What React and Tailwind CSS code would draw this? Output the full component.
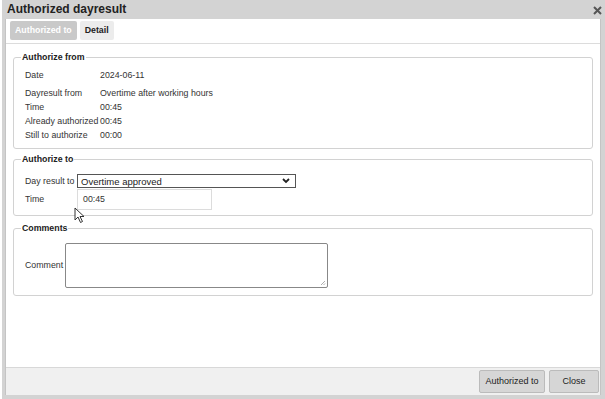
import React from 'react';

const Row = ({ label, value }) => (
  <div className="flex h-[14px] items-center">
    <span className="w-[75px] whitespace-nowrap">{label}</span>
    <span>{value}</span>
  </div>
);

const Fieldset = ({ legend, className, children }) => (
  <fieldset className={`mx-[7px] rounded-[3px] border border-[#d2d2d2] px-[11px] ${className}`}>
    <legend className="-ml-[4px] px-[1px] text-[8.8px] font-bold leading-[11px] text-[#222]">{legend}</legend>
    {children}
  </fieldset>
);

export default function App() {
  return (
    <div
      className="relative flex h-[399px] w-[605px] bg-white text-[8.8px] leading-[11px] text-[#333]"
      style={{ fontFamily: '"Liberation Sans", Arial, sans-serif' }}
    >
      <div className="ml-[2px] flex flex-1 flex-col bg-[#d3d3d3]">
        {/* title bar */}
        <div className="flex h-[19px] items-center justify-between pl-[5px] pr-[3px]">
          <span className="text-[12px] font-bold text-[#222]">Authorized dayresult</span>
          <svg width="9" height="9" viewBox="0 0 9 9" className="mt-[1px]">
            <path d="M1 1 L8 8 M8 1 L1 8" stroke="#555" strokeWidth="2" />
          </svg>
        </div>

        <div className="ml-[3px] mr-[4px] flex flex-1 flex-col border-x border-[#c4c4c4] bg-white">
          {/* tabs */}
          <div className="flex h-[25px] items-start gap-[3px] border-b border-[#dcdcdc] pl-[4px] pt-[2px]">
            <div className="flex h-[19px] items-center rounded-[2px] bg-[#c9c9c9] px-[5px] font-bold text-white">
              Authorized to
            </div>
            <div className="flex h-[19px] items-center rounded-[2px] bg-[#ececec] px-[5px] font-bold text-[#222]">
              Detail
            </div>
          </div>

          <div className="flex-1 pt-[8px]">
            <Fieldset legend="Authorize from" className="pb-[6px] pt-[5px]">
              <Row label="Date" value="2024-06-11" />
              <div className="h-[4px]" />
              <Row label="Dayresult from" value="Overtime after working hours" />
              <Row label="Time" value="00:45" />
              <Row label="Already authorized" value="00:45" />
              <Row label="Still to authorize" value="00:00" />
            </Fieldset>

            <Fieldset legend="Authorize to" className="mt-[5px] pb-[5px] pt-[9px]">
              <div className="flex items-center">
                <span className="w-[52px] whitespace-nowrap">Day result to</span>
                <div className="flex h-[14px] w-[219px] items-center justify-between border border-[#555] pl-[3px] pr-[5px] text-[9.5px] text-[#222]">
                  <span>Overtime approved</span>
                  <svg width="8" height="6" viewBox="0 0 8 6">
                    <path d="M1 1 L4 4 L7 1" stroke="#222" strokeWidth="1.8" fill="none" />
                  </svg>
                </div>
              </div>
              <div className="mt-[1px] flex items-center">
                <span className="w-[52px]">Time</span>
                <div className="flex h-[21px] w-[135px] items-center border border-[#dcdcdc] pl-[5px]">00:45</div>
              </div>
            </Fieldset>

            <Fieldset legend="Comments" className="mt-[7px] pb-[7px] pt-[9px]">
              <div className="flex items-center">
                <span className="w-[40px]">Comment</span>
                <div className="relative h-[45px] w-[263px] rounded-[2px] border border-[#888]">
                  <svg width="6" height="6" viewBox="0 0 6 6" className="absolute bottom-[1px] right-[1px]">
                    <path d="M5 1 L1 5 M5 3.5 L3.5 5" stroke="#999" strokeWidth="0.8" />
                  </svg>
                </div>
              </div>
            </Fieldset>
          </div>

          {/* footer */}
          <div className="flex h-[28px] items-center justify-end gap-[4px] border-t border-[#d8d8d8] bg-[#f0f0f0] pr-[1px]">
            <button className="h-[23px] w-[66px] rounded-[2px] border border-[#bbb] bg-[#d6d6d6] text-[9px] text-[#222]">
              Authorized to
            </button>
            <button className="h-[23px] w-[50px] rounded-[2px] border border-[#bbb] bg-[#d6d6d6] text-[9px] text-[#222]">
              Close
            </button>
          </div>
        </div>
        <div className="h-[4px]" />
      </div>

      {/* mouse pointer captured in the screenshot */}
      <svg width="11" height="17" viewBox="0 0 11 17" className="absolute left-[74px] top-[207px]">
        <path d="M1 1 L1 13 L4 10 L6.5 15.5 L8.5 14.5 L6 9.5 L10 9.5 Z" fill="white" stroke="#333" strokeWidth="1" />
      </svg>
    </div>
  );
}
